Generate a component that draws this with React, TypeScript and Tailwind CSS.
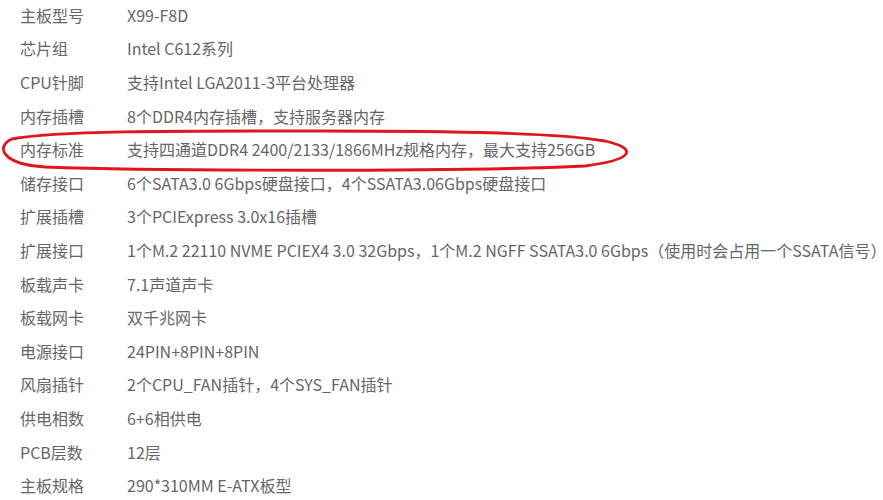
import React from 'react'

const specs: [string, string][] = [
    ['主板型号', 'X99-F8D'],
    ['芯片组', 'Intel C612系列'],
    ['CPU针脚', '支持Intel LGA2011-3平台处理器'],
    ['内存插槽', '8个DDR4内存插槽，支持服务器内存'],
    ['内存标准', '支持四通道DDR4 2400/2133/1866MHz规格内存，最大支持256GB'],
    ['储存接口', '6个SATA3.0 6Gbps硬盘接口，4个SSATA3.06Gbps硬盘接口'],
    ['扩展插槽', '3个PCIExpress 3.0x16插槽'],
    ['扩展接口', '1个M.2 22110 NVME PCIEX4 3.0 32Gbps，1个M.2 NGFF SSATA3.0 6Gbps（使用时会占用一个SSATA信号）'],
    ['板载声卡', '7.1声道声卡'],
    ['板载网卡', '双千兆网卡'],
    ['电源接口', '24PIN+8PIN+8PIN'],
    ['风扇插针', '2个CPU_FAN插针，4个SYS_FAN插针'],
    ['供电相数', '6+6相供电'],
    ['PCB层数', '12层'],
    ['主板规格', '290*310MM E-ATX板型'],
]

export default function App() {
    return (
        <div className="relative w-[883px] h-[500px] bg-white overflow-hidden text-[16px] text-[#666] font-['Noto_Sans_CJK_SC','Noto_Sans',sans-serif]">
            <div className="flex flex-col -mt-[2px] pl-[20px]">
                {specs.map(([label, value]) => (
                    <div key={label} className="flex items-center h-[33.6px] whitespace-nowrap">
                        <span className="w-[107px] shrink-0">{label}</span>
                        <span>{value}</span>
                    </div>
                ))}
            </div>
            {/* hand-drawn red mark around 内存标准 */}
            <svg className="absolute left-0 top-0 pointer-events-none" width="883" height="500" viewBox="0 0 883 500" fill="none">
                <path
                    d="M 12 139 C 60 130 200 131 320 131 C 460 131 560 133 605 141 C 640 149 632 160 585 166 C 460 172 160 171 45 167 C 0 164 -4 146 12 139"
                    stroke="#e0161e"
                    strokeWidth="2.8"
                    strokeLinecap="round"
                />
            </svg>
        </div>
    )
}
